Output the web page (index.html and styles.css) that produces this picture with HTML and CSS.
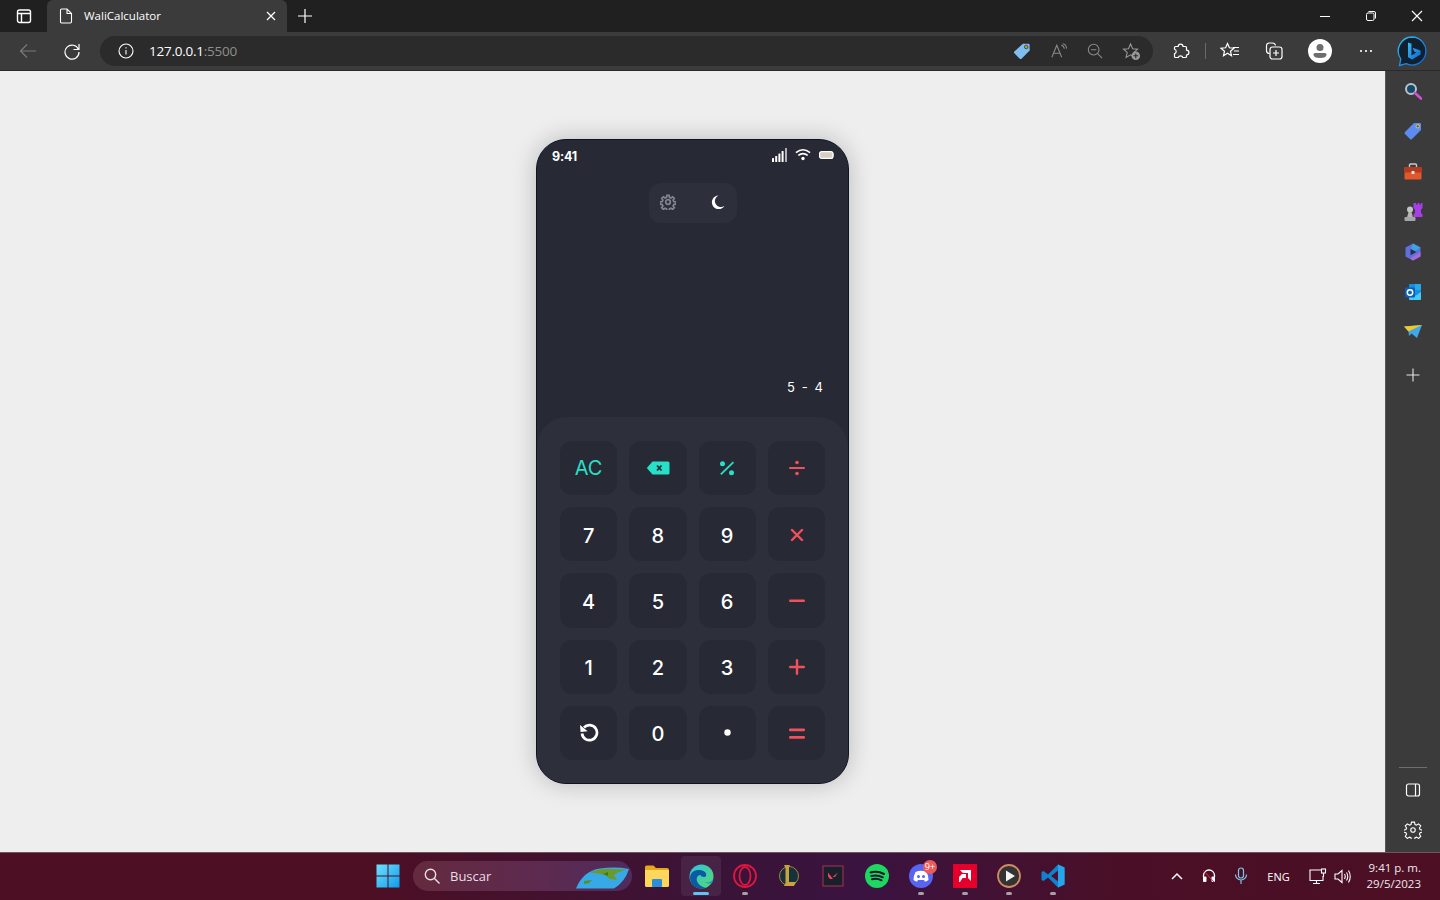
FILE: index.html
```html
<!DOCTYPE html>
<html lang="es">
<head>
<meta charset="utf-8">
<title>WaliCalculator</title>
<link rel="stylesheet" href="styles.css">
</head>
<body>
<header class="browser">
  <div class="tabstrip">
    <span class="tab-actions"><svg class="ic" width="16" height="16" viewBox="0 0 16 16" fill="none" stroke="#fff" stroke-width="1.4"><rect x="1.5" y="2" width="13" height="12.5" rx="2"/><path d="M1.5 5.5h13M5.5 5.5v9"/></svg></span>
    <div class="tab">
      <svg class="ic" width="14" height="16" viewBox="0 0 14 16" fill="none" stroke="#fff" stroke-width="1.1"><path d="M1.5 2.2q0-1.2 1.2-1.2h5.3l4.5 4.5v8.3q0 1.2-1.2 1.2H2.700q-1.200 0-1.200-1.200zM8 1v4.500h4.500"/></svg>
      <span class="tab-title">WaliCalculator</span>
      <svg class="ic tab-close" width="10" height="10" viewBox="0 0 10 10" stroke="#fff" stroke-width="1.300"><path d="M1 1l8 8M9 1l-8 8"/></svg>
    </div>
    <svg class="ic newtab" width="16" height="16" viewBox="0 0 16 16" stroke="#fff" stroke-width="1.200"><path d="M8 1v14M1 8h14"/></svg>
    <div class="winctl">
      <span class="winbtn"><svg width="12" height="12" viewBox="0 0 12 12" stroke="#fff"><path d="M1 6.500h10"/></svg></span>
      <span class="winbtn"><svg width="12" height="12" viewBox="0 0 12 12" fill="none" stroke="#fff"><rect x="1.500" y="3" width="7.500" height="7.500" rx="1.500"/><path d="M3.500 1.500h5.500q1.500 0 1.500 1.500v5.500"/></svg></span>
      <span class="winbtn"><svg width="12" height="12" viewBox="0 0 12 12" stroke="#fff" stroke-width="1.100"><path d="M1 1l10 10M11 1l-10 10"/></svg></span>
    </div>
  </div>
  <div class="toolbar">
    <svg class="ic back" width="18" height="16" viewBox="0 0 18 16" fill="none" stroke="#7b7b7b" stroke-width="1.100"><path d="M17 8H1.500M8 1.500L1.500 8 8 14.500"/></svg>
    <svg class="ic reload" width="18" height="18" viewBox="0 0 18 18" fill="none" stroke="#fff" stroke-width="1.200"><path d="M15.500 7.500A7 7 0 1 0 16 10M16 2v5.500h-5.500"/></svg>
    <div class="address">
      <svg class="ic" width="16" height="16" viewBox="0 0 16 16" fill="none" stroke="#fff" stroke-width="1.100"><circle cx="8" cy="8" r="7"/><path d="M8 7v4.500M8 4.300v1.200"/></svg>
      <span class="url">127.0.0.1<span class="url-port">:5500</span></span>
      <div class="addr-tools">
        <span class="slot"><svg width="18" height="18" viewBox="0 0 20 20"><path d="M11 2h6q1.500 0 1.500 1.500v6L9.500 18.500q-1 1-2 0L1.500 12.500q-1-1 0-2z" fill="#80bdf0"/><circle cx="14.700" cy="5.500" r="2" fill="#c9a400" stroke="#27476b"/></svg></span>
        <span class="slot"><svg width="16" height="16" viewBox="0 0 18 18" fill="none" stroke="#8a8a8a" stroke-width="1.200"><path d="M1 16L6.500 2.500 12 16M3 11.500h7M11.500 2.500q3 .5 3.500 4M13 .8q4.200.5 4.500 5.500"/></svg></span>
        <span class="slot"><svg width="16" height="16" viewBox="0 0 18 18" fill="none" stroke="#8a8a8a" stroke-width="1.200"><circle cx="7.500" cy="7.500" r="6"/><path d="M4.500 7.500h6M12 12l5 5"/></svg></span>
        <span class="slot"><svg width="19" height="19" viewBox="0 0 20 20"><path d="M9 2l2.200 5 5.300.5-4 3.500 1.200 5.300L9 13.500l-4.700 2.800L5.500 11l-4-3.500L6.800 7z" fill="none" stroke="#9a9a9a" stroke-width="1.100"/><circle cx="14.500" cy="14.500" r="4.500" fill="#9a9a9a"/><path d="M14.500 12v5M12 14.500h5" stroke="#2b2b2b" stroke-width="1.100"/></svg></span>
      </div>
    </div>
    <div class="tools">
      <span class="tool t-ext"><svg width="18" height="18" viewBox="0 0 18 18" fill="none" stroke="#fff" stroke-width="1.200"><path d="M3.500 4.500h2.700a2.400 2.400 0 0 1 4.800 0h2.500a1 1 0 0 1 1 1v2.700a2.400 2.400 0 0 1 0 4.800v1.500a1 1 0 0 1-1 1h-2.700a2.400 2.400 0 0 0-4.600 0H3.500a1 1 0 0 1-1-1v-2.700a2.400 2.400 0 0 0 0-4.600V5.500a1 1 0 0 1 1-1z"/></svg></span>
      <span class="tool-sep"></span>
      <span class="tool t-fav"><svg width="20" height="18" viewBox="0 0 20 18" fill="none" stroke="#fff" stroke-width="1.200"><path d="M7.500 1.500l1.900 4.300 4.600.4-3.500 3 1 4.500-4-2.400-4 2.400 1-4.500-3.500-3 4.600-.4zM13 5.500h6M14 9h5M13 12.500h6"/></svg></span>
      <span class="tool t-col"><svg width="18" height="18" viewBox="0 0 18 18" fill="none" stroke="#fff" stroke-width="1.200"><path d="M4.500 11.500q-3 0-3-3V4q0-3 3-3h3q2.500 0 3 2.500"/><rect x="5" y="5" width="12" height="12" rx="2.500"/><path d="M11 8v6M8 11h6"/></svg></span>
      <span class="avatar"><svg width="24" height="24" viewBox="0 0 24 24"><circle cx="12" cy="12" r="12" fill="#fff"/><circle cx="12" cy="8.500" r="3.500" fill="#6e6e6e"/><path d="M5.500 15.500q0-1.500 1.500-1.500h10q1.500 0 1.500 1.500 0 3.500-6.500 3.500t-6.500-3.500z" fill="#6e6e6e"/></svg></span>
      <span class="tool t-more"><svg width="14" height="4" viewBox="0 0 14 4" fill="#fff"><circle cx="2" cy="2" r="1.100"/><circle cx="7" cy="2" r="1.100"/><circle cx="12" cy="2" r="1.100"/></svg></span>
      <span class="tool t-bing"><svg width="32" height="32" viewBox="0 0 32 32"><defs><linearGradient id="bg1" x1="0" y1="0" x2="1" y2="1"><stop offset="0" stop-color="#37bdf2"/><stop offset="1" stop-color="#0c62d6"/></linearGradient></defs><path d="M16 2a14 14 0 1 1-6 26.700L3.500 30.500l1.300-6.500A14 14 0 0 1 16 2z" fill="#10202f" stroke="url(#bg1)" stroke-width="1.300"/><path d="M12 7.500l3.500 1.300v11.700l5-2.900-2.400-1.100-1.500-3.700 8 2.800v4l-8.500 5-4.100-2.300z" fill="url(#bg1)"/></svg></span>
    </div>
  </div>
</header>

<div class="workspace">
  <main class="page">
    <section class="phone">
      <div class="statusbar">
        <span class="clock">9:41</span>
        <span class="status-icons">
          <svg width="15" height="14" viewBox="0 0 15 14" fill="#fff"><rect x="0" y="10" width="2" height="4" rx=".6"/><rect x="3.200" y="8" width="2" height="6" rx=".6"/><rect x="6.400" y="5.500" width="2" height="8.500" rx=".6"/><rect x="9.600" y="3" width="2" height="11" rx=".6"/><rect x="13.200" y="0" width="1.600" height="14" rx=".6" opacity=".8"/></svg>
          <svg width="16" height="13" viewBox="0 0 17 13" fill="none" stroke="#fff" stroke-width="1.700"><path d="M1 4.500q7.500-6 15 0M3.500 7.500q5-4 10 0"/><circle cx="8.500" cy="10.800" r="1.800" fill="#fff" stroke="none"/></svg>
          <svg width="15" height="8" viewBox="0 0 15 8"><rect x=".6" y=".6" width="13.300" height="6.800" rx="2" fill="#d8cfc0" stroke="#fff" stroke-width="1.200"/><rect x="14.100" y="2.500" width=".9" height="3" fill="#ddd"/></svg>
        </span>
      </div>
      <div class="toggle">
        <svg width="16" height="16" viewBox="0 0 24 24" fill="none" stroke="#7f8591" stroke-width="2.600"><circle cx="12" cy="12" r="3.500"/><path d="M10.300 2h3.400l.6 3 2.100.9 2.600-1.700 2.400 2.400-1.700 2.600.9 2.100 3 .6v3.400l-3 .6-.9 2.100 1.700 2.600-2.400 2.400-2.600-1.700-2.100.9-.6 3h-3.400l-.6-3-2.100-.9-2.600 1.700-2.400-2.400 1.700-2.600-.9-2.100-3-.6v-3.400l3-.6.9-2.100-1.700-2.600 2.400-2.400 2.600 1.700 2.100-.9z"/></svg>
        <svg width="14" height="15" viewBox="0 0 14 15" fill="#fff"><path d="M7.500 .5A6.800 6.800 0 1 0 13.500 10.800 A6 6 0 1 1 7.500 .5z"/></svg>
      </div>
      <div class="display"><span class="expression">5 - 4</span></div>
      <div class="keypad">
        <button class="key key-fn">AC</button>
        <button class="key" aria-label="borrar"><svg width="24" height="14" viewBox="0 0 24 14"><path d="M6.500.5H22q1.500 0 1.500 1.500v10q0 1.500-1.500 1.500H6.500L.8 7z" fill="#27e0c8"/><path d="M11 4.500l4.500 5M15.500 4.500l-4.500 5" stroke="#20242e" stroke-width="1.700"/></svg></button>
        <button class="key" aria-label="porcentaje"><svg width="16" height="16" viewBox="0 0 16 16" fill="#27e0c8"><circle cx="3.500" cy="3.700" r="2.500"/><circle cx="12.500" cy="12.800" r="2.500"/><path d="M13.800 1.500l1.300 1.300L2.500 15 1.200 13.700z"/></svg></button>
        <button class="key key-op" aria-label="dividir"><svg width="16" height="16" viewBox="0 0 16 16" fill="#f2505a"><circle cx="8" cy="2.500" r="1.800"/><circle cx="8" cy="13.500" r="1.800"/><rect x="0" y="7" width="16" height="2" rx="1"/></svg></button>

        <button class="key key-text">7</button>
        <button class="key key-text">8</button>
        <button class="key key-text">9</button>
        <button class="key key-op" aria-label="multiplicar"><svg width="14" height="14" viewBox="0 -1 14 14" stroke="#f2505a" stroke-width="2.400" stroke-linecap="round"><path d="M2 2l10 10M12 2L2 12"/></svg></button>

        <button class="key key-text">4</button>
        <button class="key key-text">5</button>
        <button class="key key-text">6</button>
        <button class="key key-op" aria-label="restar"><svg width="16" height="16" viewBox="0 0 16 16" fill="#f2505a"><rect x="0" y="7.500" width="16" height="2.400" rx="1.200"/></svg></button>

        <button class="key key-text">1</button>
        <button class="key key-text">2</button>
        <button class="key key-text">3</button>
        <button class="key key-op" aria-label="sumar"><svg width="16" height="16" viewBox="0 0 16 16" fill="#f2505a"><rect x="0" y="6.800" width="16" height="2.400" rx="1.200"/><rect x="6.800" y="0" width="2.400" height="16" rx="1.200"/></svg></button>

        <button class="key" aria-label="deshacer"><svg width="20" height="20" viewBox="0 0 20 20" fill="none" stroke="#fff" stroke-width="2.700"><path d="M5 4.500a7.500 7.500 0 1 1-2 6"/><path d="M1 2l.6 7 7-.8z" fill="#fff" stroke="none"/></svg></button>
        <button class="key key-text">0</button>
        <button class="key" aria-label="punto"><svg width="7" height="7" viewBox="0 0 7 7" fill="#fff"><circle cx="3.500" cy="3.500" r="3.200"/></svg></button>
        <button class="key key-op" aria-label="igual"><svg width="16" height="12" viewBox="0 -1 16 12" fill="#f2505a"><rect x="0" y="0.500" width="16" height="2.800" rx="1.200"/><rect x="0" y="8" width="16" height="2.800" rx="1.200"/></svg></button>
      </div>
    </section>
  </main>

  <aside class="sidebar">
    <div class="side-top">
      <span class="side-item"><svg width="18" height="18" viewBox="0 0 18 18"><circle cx="7" cy="7" r="5" fill="#164a6b" stroke="#b8c4cc" stroke-width="2"/><path d="M11 11l6 5.500" stroke="#d24fd6" stroke-width="2.600" stroke-linecap="round"/></svg></span>
      <span class="side-item"><svg width="18" height="18" viewBox="0 0 18 18"><path d="M10 1h6q1 0 1 1v6L8 17q-1 1-2 0L1 12q-1-1 0-2z" fill="#5c8cf0"/><circle cx="13.700" cy="4.300" r="1.700" fill="#3a5ab8" stroke="#f3d33c"/></svg></span>
      <span class="side-item side-third"><svg width="20" height="18" viewBox="0 0 20 18"><path d="M6.500 4V2q0-1 1-1h5q1 0 1 1v2" fill="none" stroke="#c9c9c9" stroke-width="1.400"/><rect x="1" y="4" width="18" height="6" rx="1" fill="#b53a1e"/><rect x="1.500" y="9.500" width="17" height="7" rx="1" fill="#e2582c"/><rect x="8.500" y="8" width="3" height="3" rx=".6" fill="#e6e6e6"/></svg></span>
      <span class="side-item"><svg width="20" height="20" viewBox="0 0 20 20"><circle cx="7" cy="7.500" r="3" fill="#c4c4c4"/><path d="M5.500 10h3L10 15.500H4z" fill="#b4b4b4"/><rect x="1.500" y="15" width="11" height="4" rx="1" fill="#a6a6a6"/><path d="M11 1h2v1.500h1.500V1h2v1.500H18V1h1.500v5L18 7.500V11l1.500 1.500V15H10.500v-2.500L12 11V7.500L10.500 6V1z" fill="#a83ee8"/></svg></span>
      <span class="side-item"><svg width="18" height="18" viewBox="0 0 18 18"><path d="M9 .5L16.500 4.500v9L9 17.500 1.500 13.500v-9z" fill="#5f6fe0"/><path d="M9 .5L16.500 4.500 11 8 7 5.500z" fill="#38a6e0"/><path d="M16.500 9v4.500L9 17.500l-3-2z" fill="#a86ad8"/><path d="M6.500 6l6 3-6 3.200z" fill="#2b3040"/></svg></span>
      <span class="side-item"><svg width="18" height="18" viewBox="0 0 18 18"><rect x="5" y="1" width="12" height="16" rx="1" fill="#1490df"/><rect x="11" y="1" width="6" height="6" fill="#28a8ea"/><path d="M5 9l6 4 6-4v7q0 1-1 1H6q-1 0-1-1z" fill="#50d9ff" opacity=".8"/><rect x="1" y="4.500" width="10" height="10" rx="1" fill="#0a5fb8"/><circle cx="6" cy="9.500" r="2.700" fill="none" stroke="#fff" stroke-width="1.500"/></svg></span>
      <span class="side-item"><svg width="18" height="14" viewBox="0 0 18 14"><path d="M0 1.500L18 0 13 13 7.500 8.500 5 11 4.500 6.500z" fill="#3ea8e8"/><path d="M0 1.500L18 0 4.500 6.500z" fill="#f0c828"/></svg></span>
      <span class="side-item side-add"><svg width="14" height="14" viewBox="0 0 14 14" stroke="#e6e6e6" stroke-width="1.100"><path d="M7 .5v13M.5 7h13"/></svg></span>
    </div>
    <div class="side-bottom">
      <span class="side-rule"></span>
      <span class="side-item"><svg width="16" height="14" viewBox="0 0 16 14" fill="none" stroke="#fff" stroke-width="1.200"><rect x="1.500" y="1" width="13" height="12" rx="2"/><path d="M10.500 1v12"/></svg></span>
      <span class="side-item"><svg width="18" height="18" viewBox="0 0 24 24" fill="none" stroke="#fff" stroke-width="1.500"><circle cx="12" cy="12" r="3"/><path d="M10 1.500h4l.7 3.200 2 .8 2.800-1.700 2.800 2.800-1.700 2.800.8 2 3.100.7v2.800l-3.100.7-.8 2 1.700 2.800-2.800 2.800-2.800-1.700-2 .8-.7 3.200h-4l-.7-3.200-2-.8-2.800 1.700-2.800-2.800 1.700-2.800-.8-2-3.100-.7v-2.800l3.100-.7.800-2-1.700-2.800 2.800-2.800 2.800 1.700 2-.8z"/></svg></span>
    </div>
  </aside>
</div>

<footer class="taskbar">
  <span class="task"><svg width="24" height="24" viewBox="0 0 24 24"><defs><linearGradient id="w1" x1="0" y1="0" x2="1" y2="1"><stop offset="0" stop-color="#6fe0ff"/><stop offset="1" stop-color="#0f9be8"/></linearGradient></defs><path d="M.5.500h11v11H.5zM12.500.500h11v11h-11zM.5 12.500h11v11H.5zM12.500 12.500h11v11h-11z" fill="url(#w1)"/></svg></span>
  <div class="search">
    <svg width="16" height="16" viewBox="0 0 16 16" fill="none" stroke="#e8dfe4" stroke-width="1.400"><circle cx="6.500" cy="6.500" r="5.200"/><path d="M10.500 10.500l5 5"/></svg>
    <span class="search-text">Buscar</span>
    <svg class="search-art" width="54" height="22" viewBox="0 0 54 22"><path d="M0 21.500Q7 4 24 1.500 40 -.5 53 2 49 15 38 21.500z" fill="#37a9e6"/><path d="M14 5.500q8-4 18-3.500l18 .5-8 3-4 2.500 3 5-7-1-5-4-7-1.500z" fill="#6b9a2b"/><path d="M8 14l8-1-3 3-5 1z" fill="#5a8d25"/><path d="M32 5l-5 2 5 2z" fill="#3f7a1d"/></svg>
  </div>
  <span class="task task-folder"><svg width="24" height="22" viewBox="0 0 24 22"><path d="M0 2q0-1.500 1.500-1.500h7l2.500 2.500h11q2 0 2 2v2H0z" fill="#e3a81c"/><path d="M0 5h24v15.500q0 1.500-1.500 1.500h-21Q0 22 0 20.500z" fill="#fdd65c"/><rect x="7" y="14" width="10" height="8" rx="1" fill="#2a8fd8"/></svg></span>
  <span class="task task-active"><svg width="25" height="25" viewBox="0 0 25 25"><defs><linearGradient id="e1" x1="0" y1="0" x2="1" y2="1"><stop offset="0" stop-color="#2fc4e0"/><stop offset="1" stop-color="#55d86e"/></linearGradient></defs><circle cx="12.500" cy="12.500" r="12" fill="url(#e1)"/><path d="M1 14C1 7 8 5 13 6.500 18.500 8 18 13 15 13c-2 0-3-1-3.500-2-3 0-4.500 3-3.500 6 1 3.500 5 6 9 7-8 3-16-3-16-10z" fill="#0c59a4"/><path d="M24 15c-1 3-5 4-8 3 3 2 6 2 7.500 0 .3-1 .5-2 .5-3z" fill="#1d8fd8"/></svg><span class="task-bar"></span></span>
  <span class="task task-run"><svg width="24" height="24" viewBox="0 0 24 24" fill="none" stroke="#e0163f" stroke-width="1.800"><circle cx="12" cy="12" r="11"/><ellipse cx="12" cy="12" rx="5.500" ry="9"/></svg><span class="task-dot"></span></span>
  <span class="task"><svg width="20" height="24" viewBox="0 0 20 24"><circle cx="10" cy="12" r="9.500" fill="#16303c" stroke="#9c8a3a"/><path d="M5 1h6l-1 2v15h7l-2 4H5l1.500-3V4z" fill="#c8a33e"/></svg></span>
  <span class="task"><svg width="22" height="22" viewBox="0 0 22 22"><rect x="1" y="1" width="20" height="20" fill="#18202b" stroke="#8a2f45" stroke-width="1.300"/><path d="M6 7.500l5 6.500h-3L6 11.500zM16 7.500L13 12h-2.500l5.500-4.500z" fill="#f2425a"/></svg></span>
  <span class="task"><svg width="24" height="24" viewBox="0 0 24 24" fill="none"><circle cx="12" cy="12" r="12" fill="#1ed760"/><path d="M5.500 8.500q7-2 13.500 1.500M6.300 12q6-1.700 11.500 1.300M7 15.300q5-1.300 9.500 1" stroke="#15192b" stroke-width="2" stroke-linecap="round"/></svg></span>
  <span class="task task-run"><svg width="24" height="24" viewBox="0 0 24 24"><circle cx="12" cy="12" r="12" fill="#5865f2"/><path d="M6.500 8q5.500-2.500 11 0 2 3.500 2 8-1.500 1.300-3.500 1.700L15 16H9l-1 1.700q-2-.4-3.500-1.700 0-4.500 2-8z" fill="#fff"/><circle cx="9.500" cy="12.500" r="1.500" fill="#5865f2"/><circle cx="14.500" cy="12.500" r="1.500" fill="#5865f2"/></svg><span class="badge">9+</span><span class="task-dot"></span></span>
  <span class="task task-run"><svg width="24" height="24" viewBox="0 0 24 24"><rect width="24" height="24" fill="#e4002b"/><path d="M7 6h11v11l-3-3V9H10zM6 18v-5l3-3h4v4H9.500L7 18z" fill="#fff"/></svg><span class="task-dot"></span></span>
  <span class="task task-run"><svg width="24" height="24" viewBox="0 0 24 24"><circle cx="12" cy="12" r="11" fill="#333" stroke="#cf8a62" stroke-width="1.800"/><path d="M9 6.500l9 5.500-9 5.500z" fill="#f4f4f4"/></svg><span class="task-dot"></span></span>
  <span class="task task-run"><svg width="24" height="24" viewBox="0 0 24 24"><path d="M17 .5L7 10.500 2.500 7 .5 8v8l2 1L7 13.500l10 10 6.500-3V3.500z" fill="#0f82cf"/><path d="M17 .5l6.500 3v17l-6.500 3zM17 6.500L10 12l7 5.500z" fill="#28a5ea"/><path d="M17 6.500L10 12l7 5.500z" fill="#4b1030"/></svg><span class="task-dot"></span></span>

  <div class="tray">
    <span class="tray-item t-chev"><svg width="12" height="8" viewBox="0 0 12 8" fill="none" stroke="#fff" stroke-width="1.500"><path d="M1 7l5-5 5 5"/></svg></span>
    <span class="tray-item"><svg width="14" height="14" viewBox="0 0 14 14" fill="none"><path d="M1.500 8V6.500a5.500 5.500 0 0 1 11 0V8" stroke="#fff" stroke-width="1.300"/><rect x="1" y="7.500" width="3.500" height="5.500" rx="1" fill="#fff"/><rect x="9.500" y="7.500" width="3.500" height="5.500" rx="1" fill="#fff"/><path d="M1.500 1.500L12 13" stroke="#e8304a"/></svg></span>
    <span class="tray-item"><svg width="14" height="18" viewBox="0 0 14 18" fill="none" stroke="#7ec6ea" stroke-width="1.200"><rect x="4.500" y="1" width="5" height="10" rx="2.500"/><path d="M1.500 7.500a5.500 5.500 0 0 0 11 0M7 13v4"/></svg></span>
    <span class="tray-lang">ENG</span>
    <span class="tray-item t-net"><svg width="18" height="17" viewBox="0 0 18 17" fill="none" stroke="#fff" stroke-width="1.100"><path d="M12 2H1v10.500h13V8M7.500 12.500v3M4 15.500h7"/><rect x="12.500" y="1" width="4" height="4"/><path d="M14.500 5v4"/></svg></span>
    <span class="tray-item t-vol"><svg width="17" height="15" viewBox="0 0 17 15" fill="none" stroke="#fff" stroke-width="1.100"><path d="M1 5h3l4-3.500v12L4 10H1zM10.500 5q1.500 2.500 0 5M12.500 3.500q2.500 4 0 8M14.500 1.500q3.500 6 0 12"/></svg></span>
    <span class="tray-clock"><span>9:41 p. m.</span><span>29/5/2023</span></span>
  </div>
</footer>
</body>
</html>
```

FILE: styles.css
```css
* { box-sizing: border-box; }

html, body { height: 100%; }

body {
  margin: 0;
  height: 900px;
  overflow: hidden;
  display: flex;
  flex-direction: column;
  font-family: "Open Sans", "Noto Sans", sans-serif;
  background: #eeeeee;
}

svg { display: block; flex: none; }

/* Browser chrome */
.browser { flex: none; height: 71px; display: flex; flex-direction: column; }

.tabstrip {
  height: 32px;
  background: #202020;
  display: flex;
  align-items: center;
}

.tab-actions {
  width: 47px;
  display: flex;
  justify-content: center;
}

.tab {
  width: 240px;
  height: 32px;
  background: #3b3b3b;
  border-radius: 6px 6px 0 0;
  display: flex;
  align-items: center;
  padding: 0 11px 0 12px;
}

.tab-title {
  margin-left: 11px;
  padding-bottom: 2px;
  font-size: 11.5px;
  color: #fff;
  flex: 1;
}

.newtab { margin-left: 10px; }

.winctl { margin-left: auto; display: flex; }

.winbtn {
  width: 46px;
  height: 32px;
  display: flex;
  align-items: center;
  justify-content: center;
}

.toolbar {
  height: 39px;
  background: #3b3b3b;
  border-bottom: 1px solid #2a2a2a;
  display: flex;
  align-items: center;
}

.back { margin-left: 19px; }

.reload { margin-left: 26px; }

.address {
  margin-left: 19px;
  width: 1053px;
  height: 30px;
  background: #2b2b2b;
  border-radius: 15px;
  display: flex;
  align-items: center;
  padding-left: 18px;
}

.url {
  margin-left: 15px;
  font-size: 13.5px;
  letter-spacing: -0.25px;
  line-height: 28px;
  color: #fff;
}

.url-port { color: #8f8f8f; }

.addr-tools {
  margin-left: auto;
  margin-right: 4px;
  display: flex;
}

.slot {
  width: 36px;
  height: 30px;
  display: flex;
  align-items: center;
  justify-content: center;
}

.slot:first-child { margin-right: 1px; margin-left: -1px; }

.tools { flex: 1; display: flex; align-items: center; }

.tool {
  height: 30px;
  display: flex;
  align-items: center;
  justify-content: center;
}

.t-ext { width: 18px; margin-left: 19px; }

.tool-sep {
  width: 1px;
  height: 16px;
  background: #6a6a6a;
  margin-left: 15px;
}

.t-fav { width: 20px; margin-left: 14px; }

.t-col { width: 18px; margin-left: 25px; }

.avatar { margin-left: 25px; }

.t-more { width: 14px; margin-left: 27px; }

.t-bing { width: 32px; margin-left: 23px; }

/* Workspace */
.workspace { flex: 1; min-height: 0; display: flex; }

.page {
  flex: 1;
  background: #eeeeee;
  display: flex;
  align-items: center;
  justify-content: center;
}

.phone {
  width: 313px;
  height: 645px;
  background: #272a35;
  border: 1px solid #0d1424;
  border-radius: 30px;
  box-shadow: 0 0 24px rgba(0, 0, 0, 0.22);
  display: flex;
  flex-direction: column;
  overflow: hidden;
  font-family: Inter, "Open Sans", sans-serif;
  color: #fff;
}

.statusbar {
  flex: none;
  height: 43px;
  padding: 7px 14px 0 15px;
  display: flex;
  justify-content: space-between;
  align-items: flex-start;
}

.clock {
  font-size: 12.5px;
  font-weight: 700;
  line-height: 18px;
  letter-spacing: -0.2px;
  padding-top: 1px;
}

.status-icons { display: flex; align-items: center; gap: 8px; height: 15px; }

.toggle {
  flex: none;
  align-self: center;
  width: 88px;
  height: 40px;
  background: #2d303b;
  border-radius: 12px;
  display: flex;
  align-items: center;
  justify-content: space-between;
  padding: 0 12px 2px 11px;
}

.display {
  flex: 1;
  display: flex;
  justify-content: flex-end;
  align-items: flex-end;
  padding: 0 24px 21px 0;
}

.expression {
  font-size: 13px;
  line-height: 18px;
  letter-spacing: 1.1px;
  word-spacing: 1px;
  white-space: pre;
}

.keypad {
  flex: none;
  height: 366px;
  background: #2d303b;
  border-radius: 30px 30px 0 0;
  padding: 24px 23px 23px 23px;
  display: grid;
  grid-template-columns: repeat(4, 1fr);
  grid-template-rows: repeat(5, 1fr);
  gap: 12px;
}

.key {
  border: 0;
  padding: 0;
  background: #272a35;
  border-radius: 12px;
  color: #fff;
  font-family: inherit;
  display: flex;
  align-items: center;
  justify-content: center;
}

.key-op svg { margin-left: 1px; }

.key-text { font-size: 20px; font-weight: 500; padding-top: 3px; }

.key-fn { font-size: 20px; color: #27e0c8; font-weight: 400; }

/* Edge sidebar */
.sidebar {
  flex: none;
  width: 55px;
  background: #3b3b3b;
  border-left: 1px solid #555;
  display: flex;
  flex-direction: column;
  justify-content: space-between;
  padding-bottom: 2px;
}

.side-top, .side-bottom { display: flex; flex-direction: column; align-items: center; }

.side-top { padding-right: 1px; }

.side-item {
  width: 100%;
  height: 40px;
  display: flex;
  align-items: center;
  justify-content: center;
}

.side-third { margin-top: 1px; }

.side-add { margin-top: 3px; }

.side-rule { width: 28px; height: 1px; background: #6e6e6e; margin-bottom: 2px; }

/* Taskbar */
.taskbar {
  flex: none;
  height: 48px;
  border-top: 1px solid #6e5560;
  background: linear-gradient(90deg, #4c0f24 0%, #4c0f24 26%, #3a1338 50%, #3a1340 60%, #4a0f26 78%, #4c0f24 100%);
  display: flex;
  align-items: center;
  padding: 0 0 1px 366px;
  color: #fff;
}

.task {
  position: relative;
  width: 44px;
  height: 40px;
  flex: none;
  display: flex;
  align-items: center;
  justify-content: center;
}

.task-active {
  background: rgba(255, 255, 255, 0.07);
  border-radius: 4px;
  width: 40px;
  margin: 0 2px;
}

.task-bar {
  position: absolute;
  left: 12px;
  right: 12px;
  bottom: 1px;
  height: 3px;
  border-radius: 2px;
  background: #5ec5f5;
}

.task-dot {
  position: absolute;
  left: 19px;
  bottom: 1px;
  width: 6px;
  height: 3px;
  border-radius: 2px;
  background: #a9a0a6;
}

.badge {
  position: absolute;
  top: 4px;
  right: 6px;
  width: 14px;
  height: 14px;
  border-radius: 50%;
  background: #ee5a5a;
  font-size: 9px;
  line-height: 14px;
  text-align: center;
  color: #fff;
}

.search {
  flex: none;
  width: 219px;
  height: 30px;
  margin: 0 3px;
  border-radius: 15px;
  background: linear-gradient(90deg, #642a3e 0%, #5d2a50 60%, #4e2c5c 100%);
  display: flex;
  align-items: center;
  padding-left: 11px;
  position: relative;
}

.search-text {
  margin-left: 10px;
  font-size: 13px;
  color: #e8dfe4;
}

.search-art {
  position: absolute;
  right: 2px;
  bottom: 2px;
}

.tray {
  margin-left: auto;
  display: flex;
  align-items: center;
  padding-right: 19px;
}

.tray-item {
  display: flex;
  justify-content: center;
  align-items: center;
  width: 32px;
}

.t-net { width: 24px; margin-left: 5px; }

.t-vol { width: 25px; }

.tray-lang { font-size: 11px; width: 44px; text-align: center; color: #fff; }

.tray-clock {
  margin-left: 12px;
  display: flex;
  flex-direction: column;
  align-items: flex-end;
  font-size: 11.5px;
  line-height: 16px;
  color: #f0e8ec;
}
```
